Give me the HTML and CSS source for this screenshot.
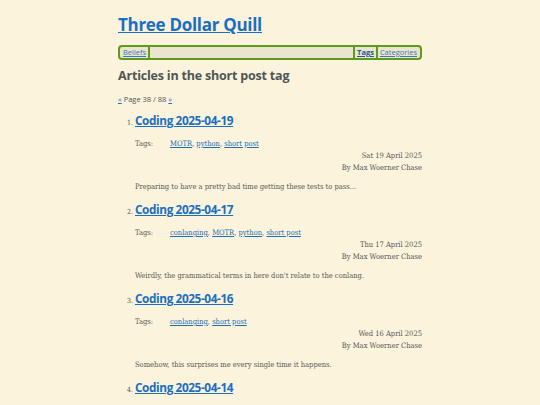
FILE: index.html
```html
<!DOCTYPE html>
<html>
<head>
<meta charset="utf-8">
<link rel="stylesheet" href="styles.css">
</head>
<body>
<div class="page">
  <h1 class="site-title"><a href="#">Three Dollar Quill</a></h1>
  <nav class="nav">
    <a class="nav-item first" href="#">Beliefs</a>
    <span class="nav-spacer"></span>
    <a class="nav-item sep current" href="#">Tags</a>
    <a class="nav-item sep" href="#">Categories</a>
  </nav>
  <h2 class="heading">Articles in the short post tag</h2>
  <p class="pager"><a href="#">«</a> Page 38 / 88 <a href="#">»</a></p>
  <ol class="articles">
    <li class="article">
      <a class="article-title" href="#">Coding 2025-04-19</a>
      <div class="meta">
        <span class="meta-label">Tags:</span>
        <span class="meta-tags"><a href="#">MOTR</a>, <a href="#">python</a>, <a href="#">short post</a></span>
      </div>
      <div class="date">Sat 19 April 2025</div>
      <div class="author">By Max Woerner Chase</div>
      <p class="summary">Preparing to have a pretty bad time getting these tests to pass...</p>
    </li>
    <li class="article">
      <a class="article-title" href="#">Coding 2025-04-17</a>
      <div class="meta">
        <span class="meta-label">Tags:</span>
        <span class="meta-tags"><a href="#">conlanging</a>, <a href="#">MOTR</a>, <a href="#">python</a>, <a href="#">short post</a></span>
      </div>
      <div class="date">Thu 17 April 2025</div>
      <div class="author">By Max Woerner Chase</div>
      <p class="summary">Weirdly, the grammatical terms in here don't relate to the conlang.</p>
    </li>
    <li class="article">
      <a class="article-title" href="#">Coding 2025-04-16</a>
      <div class="meta">
        <span class="meta-label">Tags:</span>
        <span class="meta-tags"><a href="#">conlanging</a>, <a href="#">short post</a></span>
      </div>
      <div class="date">Wed 16 April 2025</div>
      <div class="author">By Max Woerner Chase</div>
      <p class="summary">Somehow, this surprises me every single time it happens.</p>
    </li>
    <li class="article">
      <a class="article-title" href="#">Coding 2025-04-14</a>
    </li>
  </ol>
</div>
</body>
</html>
```
FILE: styles.css
```css
html, body {
  margin: 0;
  padding: 0;
  background: #fbf3dc;
}
body {
  font-family: "DejaVu Serif Condensed", "DejaVu Serif", serif;
  font-stretch: condensed;
  color: #585858;
  font-size: 7.5px;
}
a { color: #1f6fb8; }
.page {
  width: 304px;
  margin: 0 auto;
}
.site-title {
  margin: 14px 0 0;
  font-family: "Open Sans", sans-serif;
  font-stretch: normal;
  font-size: 17px;
  line-height: 22px;
  font-weight: 700;
  letter-spacing: -0.3px;
}
.site-title a { color: #1a6fc0; }
.nav {
  margin-top: 9px;
  height: 11px;
  border: 2px solid #5e9a1c;
  border-radius: 4px;
  background: #ebe4cf;
  display: flex;
  align-items: stretch;
  font-family: "Open Sans", sans-serif;
  font-stretch: normal;
  font-size: 7.5px;
  line-height: 11px;
  padding: 0 1px;
}
.nav-item {
  padding: 0 2px;
  color: #3a78b8;
}
.nav-item.first { border-right: 2px solid #5e9a1c; }
.nav-item.sep { border-left: 2px solid #5e9a1c; }
.nav-item.current { font-weight: 700; color: #24588f; }
.nav-spacer { flex: 1; }
.heading {
  margin: 8px 0 0;
  font-family: "Open Sans", sans-serif;
  font-stretch: normal;
  font-size: 12.5px;
  line-height: 16px;
  font-weight: 700;
  color: #4e5656;
  letter-spacing: -0.2px;
}
.pager {
  margin: 10px 0 0;
  font-family: "Open Sans", sans-serif;
  font-stretch: normal;
  font-size: 7.5px;
  line-height: 10px;
  color: #555;
}
.articles {
  margin: 8px 0 0;
  padding-left: 17px;
  font-size: 7px;
}
.article { margin-bottom: 8px; }
.article::marker { color: #555; }
.article-title {
  font-family: "Open Sans", sans-serif;
  font-stretch: normal;
  font-size: 11.8px;
  line-height: 16px;
  font-weight: 700;
  color: #1a6fc0;
  letter-spacing: -0.4px;
}
.meta {
  margin-top: 10px;
  display: flex;
  line-height: 12px;
  font-size: 7.5px;
}
.meta-label { width: 35px; }
.date, .author {
  text-align: right;
  line-height: 12px;
  font-size: 7.5px;
}
.summary {
  margin: 7px 0 0;
  line-height: 12px;
  font-size: 7.5px;
}
```
